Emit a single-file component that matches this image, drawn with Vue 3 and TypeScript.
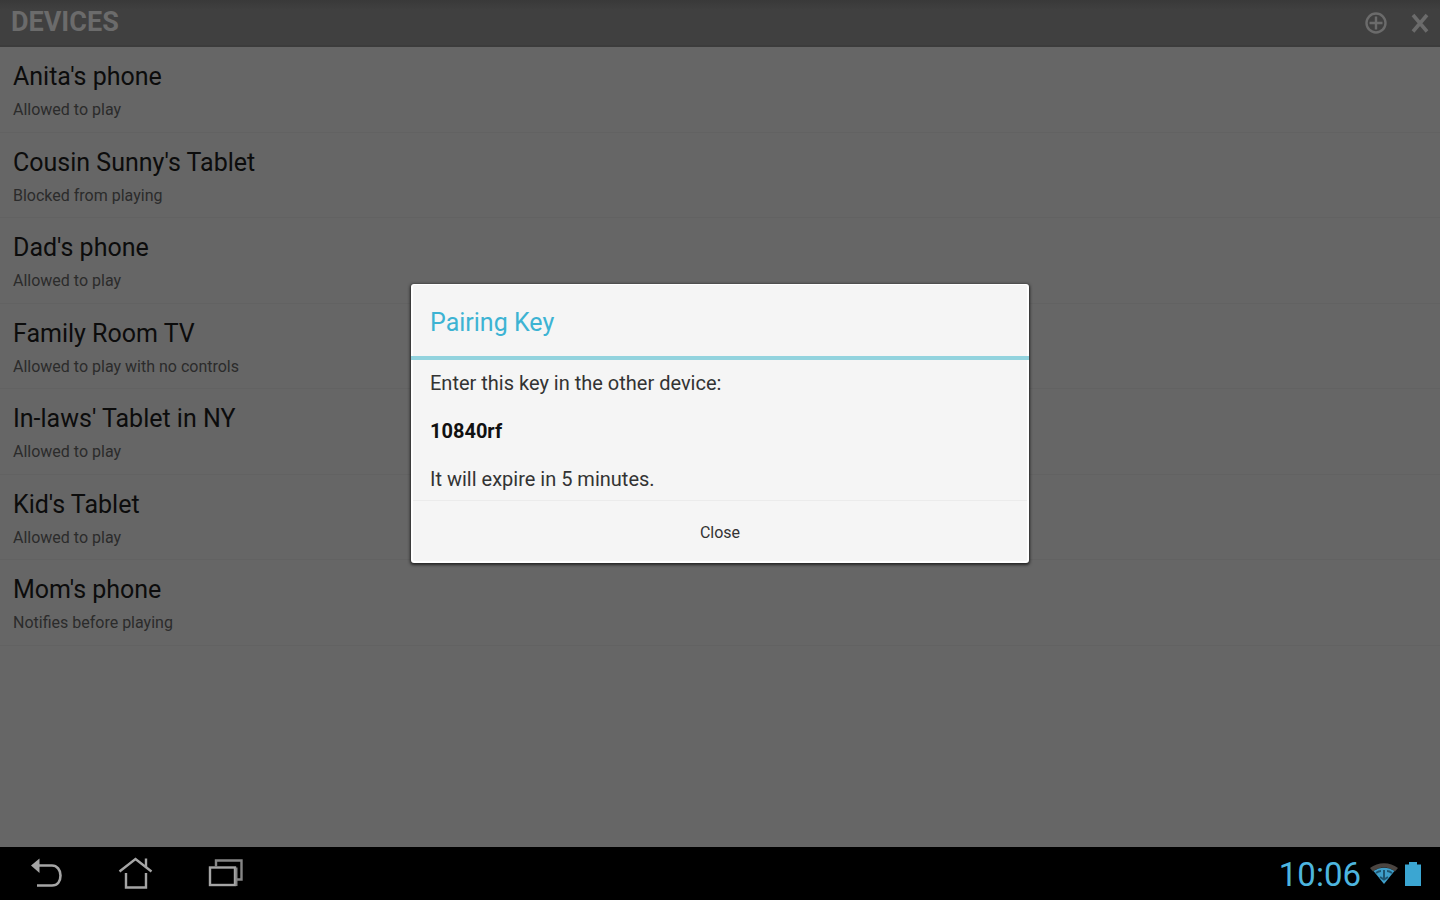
<script setup lang="ts">
import { ref } from 'vue'

interface Device {
  name: string
  status: string
}

const devices: Device[] = [
  { name: 'Anita\'s phone', status: 'Allowed to play' },
  { name: 'Cousin Sunny\'s Tablet', status: 'Blocked from playing' },
  { name: 'Dad\'s phone', status: 'Allowed to play' },
  { name: 'Family Room TV', status: 'Allowed to play with no controls' },
  { name: 'In-laws\' Tablet in NY', status: 'Allowed to play' },
  { name: 'Kid\'s Tablet', status: 'Allowed to play' },
  { name: 'Mom\'s phone', status: 'Notifies before playing' },
]

const pairingKey = '10840rf'
const dialogOpen = ref(true)
</script>

<template>
  <div class="screen">
    <main class="stage">
      <header class="action-bar">
        <h1>DEVICES</h1>
        <div class="actions">
          <button type="button" aria-label="Add device" @click="dialogOpen = true">
            <svg width="24" height="24" viewBox="0 0 24 24" fill="none" stroke="currentColor">
              <circle cx="12" cy="12" r="9.5" stroke-width="2.4" />
              <path d="M12 5.5v13M5.500 12h13" stroke-width="2.4" />
            </svg>
          </button>
          <button type="button" aria-label="Close devices">
            <svg width="24" height="24" viewBox="0 0 24 24" fill="none" stroke="currentColor" stroke-width="3.6">
              <path d="M5 4L19 20.500M19 4L5 20.500" />
            </svg>
          </button>
        </div>
      </header>

      <ul class="devices">
        <li v-for="device in devices" :key="device.name">
          <span class="name">{{ device.name }}</span>
          <span class="status">{{ device.status }}</span>
        </li>
      </ul>

      <div v-if="dialogOpen" class="scrim">
        <section class="dialog" role="dialog" aria-modal="true" aria-labelledby="dialog-title">
          <h2 id="dialog-title">Pairing Key</h2>
          <div class="message">
            <p>Enter this key in the other device:</p>
            <p><strong>{{ pairingKey }}</strong></p>
            <p>It will expire in 5 minutes.</p>
          </div>
          <button type="button" class="close" @click="dialogOpen = false">Close</button>
        </section>
      </div>
    </main>

    <nav class="system-bar" aria-label="System">
      <div class="keys">
        <button type="button" aria-label="Back">
          <svg width="36" height="36" viewBox="0 0 36 36" fill="none" stroke="currentColor" stroke-width="2.6">
            <path d="M9 9.500H23C28 9.500 31.500 14 31.500 19.500C31.500 25.500 28.500 29.500 23 29.500H8" />
            <path d="M2 9.500L10.500 2.500V17Z" fill="currentColor" stroke="none" />
          </svg>
        </button>
        <button type="button" aria-label="Home">
          <svg width="36" height="36" viewBox="0 0 36 36" fill="none" stroke="currentColor" stroke-width="2.4">
            <path d="M1.500 15.500L17.500 3L33.500 15.500" />
            <path d="M8 17V31.500H28V17" />
            <path d="M28 2.500V11" />
          </svg>
        </button>
        <button type="button" aria-label="Recent apps">
          <svg width="36" height="36" viewBox="0 0 36 36" fill="none" stroke="currentColor" stroke-width="2.4">
            <rect x="3" y="11.500" width="25" height="17.500" />
            <path d="M9 10.500V4.500H34.500V23.500H30" stroke="#858585" />
            <path d="M29.500 11.500V30" stroke="#858585" stroke-width="2" />
          </svg>
        </button>
      </div>
      <div class="tray">
        <time datetime="10:06">10:06</time>
        <div class="indicators">
          <svg width="30" height="24" viewBox="0 0 30 24" role="img" aria-label="Wi-Fi">
            <path d="M1 6C9-.5 21-.5 29 6L26 9.500C19 4 11 4 4 9.500Z" fill="#4b4541" />
            <path d="M4.500 9C11 4.500 19 4.500 25.500 9L15 22Z" fill="#3f9fca" />
            <path d="M7 11C9 9.500 11 9 12 9M18 9C19.500 9 21 9.500 23 11M11 15L15 17.500L19 15" fill="none" stroke="#1d5571" stroke-width="2" />
            <path d="M15 8V17" stroke="#1d5571" stroke-width="2" />
          </svg>
          <svg width="18" height="26" viewBox="0 0 18 26" role="img" aria-label="Battery full">
            <path d="M1 3.500H5V1H13V3.500H17V25H1Z" fill="#3ba6d2" />
          </svg>
        </div>
      </div>
    </nav>
  </div>
</template>

<style>
body {
  margin: 0;
  background: #000;
}
</style>

<style scoped>
.screen {
  display: flex;
  flex-direction: column;
  min-height: 100vh;
  font-family: Roboto, "Noto Sans", sans-serif;
}

h1,
h2,
p,
ul {
  margin: 0;
  padding: 0;
}

button {
  margin: 0;
  padding: 0;
  border: 0;
  background: none;
  color: inherit;
  font: inherit;
}

svg {
  display: block;
}

.stage {
  position: relative;
  flex: 1;
  background: #666;
}

.action-bar {
  display: flex;
  align-items: center;
  justify-content: space-between;
  height: 47px;
  box-sizing: border-box;
  padding: 0 8px 0 11px;
  border-bottom: 2px solid #3c3c3c;
  background: linear-gradient(#393939, #404040 10px);
  color: #6b6b6b;
}

h1 {
  font-size: 27px;
  line-height: 29px;
  font-weight: 700;
}

.actions {
  display: flex;
  gap: 20px;
}

.devices {
  display: grid;
  grid-auto-rows: 1fr;
  min-height: 599px;
  list-style: none;
}

.devices li {
  display: flex;
  flex-direction: column;
  gap: 5px;
  padding: 14px 13px 0;
  border-bottom: 1px solid #626262;
}

.name {
  font-size: 25px;
  line-height: 32px;
  color: #0c0c0c;
}

.status {
  font-size: 16px;
  line-height: 24px;
  color: #2b2b2b;
}

.scrim {
  position: absolute;
  inset: 0;
  display: flex;
  align-items: center;
  justify-content: center;
}

.dialog {
  display: flex;
  flex-direction: column;
  width: 618px;
  max-width: 100%;
  box-sizing: border-box;
  border: 2px solid #fff;
  border-width: 1px 2px 2px;
  border-radius: 3px;
  background: #f5f5f5;
  box-shadow: 0 1px 3px 1px #262626;
}

h2 {
  margin: 0 -2px;
  padding: 21px 19px 16px;
  border-bottom: 4px solid #92d3de;
  font-size: 25px;
  line-height: 34px;
  font-weight: 400;
  color: #3db3d3;
}

.message {
  display: flex;
  flex-direction: column;
  gap: 24px;
  padding: 11px 17px 9px;
  border-bottom: 1px solid #ebebeb;
  font-size: 20px;
  line-height: 24px;
  color: #333;
}

strong {
  color: #111;
}

.close {
  height: 60px;
  padding-top: 2px;
  font-size: 16px;
  color: #333;
}

.system-bar {
  display: flex;
  align-items: center;
  justify-content: space-between;
  height: 53px;
  padding: 0 18px 0 29px;
  background: #000;
  color: #a5a5a5;
}

.keys {
  display: flex;
  gap: 53px;
}

.tray {
  display: flex;
  align-items: center;
  gap: 8px;
  color: #4db5df;
}

.indicators {
  display: flex;
  align-items: center;
  gap: 5px;
}

time {
  padding-top: 2px;
  font-size: 33px;
  line-height: 40px;
}
</style>
